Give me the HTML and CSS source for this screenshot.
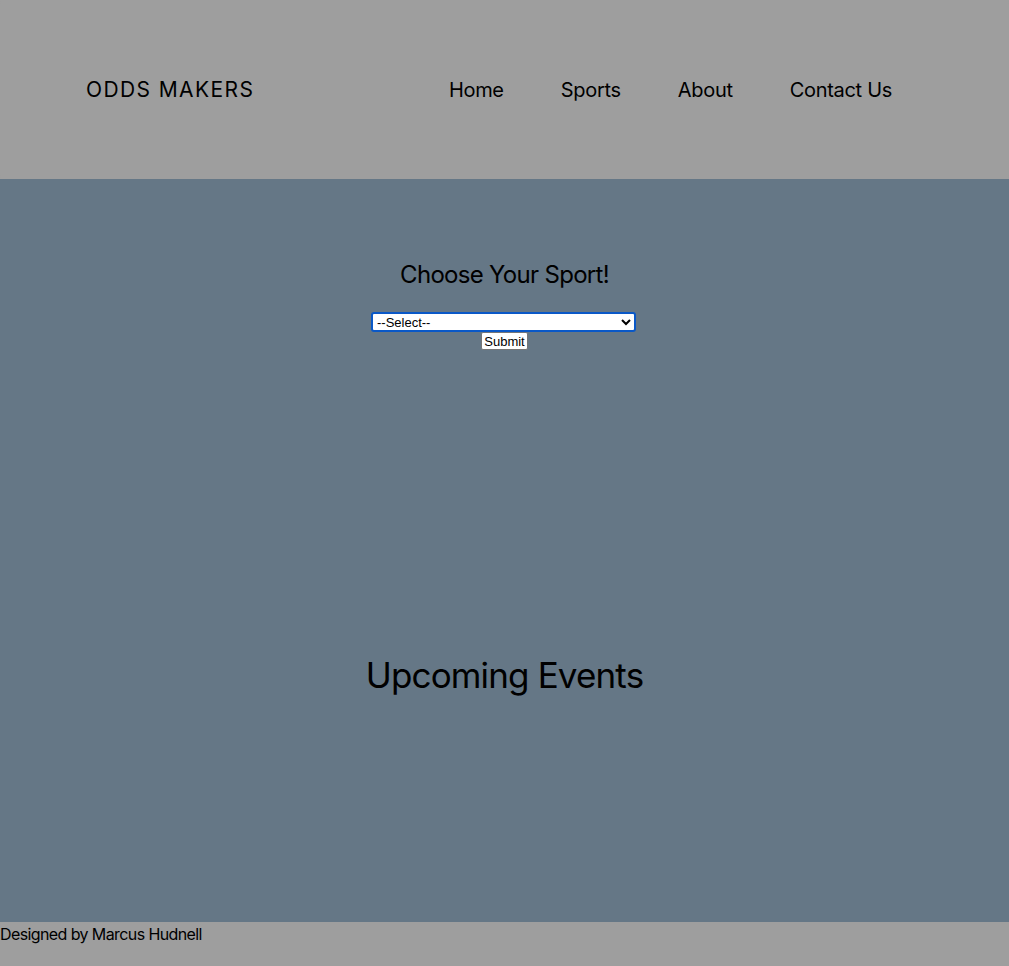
FILE: index.html
```html
<!DOCTYPE html>
<html>
<head>
<meta charset="utf-8">
<link rel="stylesheet" href="styles.css">
</head>
<body>
<header class="site-header">
  <div class="logo">ODDS MAKERS</div>
  <nav class="nav">
    <a href="#">Home</a>
    <a href="#">Sports</a>
    <a href="#">About</a>
    <a href="#">Contact Us</a>
  </nav>
</header>
<main class="main">
  <section class="chooser">
    <h2 class="chooser-title">Choose Your Sport!</h2>
    <form class="chooser-form">
      <select class="sport-select">
        <option>--Select--</option>
      </select>
      <button type="button" class="submit-btn">Submit</button>
    </form>
  </section>
  <section class="events">
    <h1 class="events-title">Upcoming Events</h1>
  </section>
</main>
<footer class="site-footer">Designed by Marcus Hudnell</footer>
</body>
</html>
```
FILE: styles.css
```css
html, body {
  margin: 0;
  padding: 0;
}
body {
  font-family: Inter, "Noto Sans", sans-serif;
  color: #000;
  background: #9e9e9e;
}
.site-header {
  height: 179px;
  box-sizing: border-box;
  background: #9e9e9e;
  border-radius: 4px;
  display: flex;
  align-items: center;
  justify-content: space-between;
  padding: 0 117px 0 86px;
}
.logo {
  font-size: 21px;
  letter-spacing: 1.4px;
  font-weight: 400;
}
.nav {
  display: flex;
  gap: 57px;
}
.nav a {
  color: #000;
  text-decoration: none;
  font-size: 20px;
  letter-spacing: -0.3px;
}
.main {
  background: #657786;
  height: 743px;
  display: flex;
  flex-direction: column;
  align-items: center;
}
.chooser {
  display: flex;
  flex-direction: column;
  align-items: center;
  padding-top: 80px;
}
.chooser-title {
  margin: 0;
  font-size: 24px;
  font-weight: 400;
  letter-spacing: -0.7px;
  line-height: 32px;
}
.chooser-form {
  margin-top: 21px;
  display: flex;
  flex-direction: column;
  align-items: center;
}
.sport-select {
  width: 265px;
  height: 20px;
  box-sizing: border-box;
  font-family: "Liberation Sans", Arial, sans-serif;
  font-size: 13px;
  border: 2px solid #0a58c7;
  border-radius: 3px;
  background: #fff;
  padding: 0;
  margin-left: -2px;
}
.submit-btn {
  margin-top: 0;
  font-family: "Liberation Sans", Arial, sans-serif;
  font-size: 13px;
  padding: 0 2px;
  height: 18px;
  background: #fff;
  border: 1px solid #767676;
  border-radius: 2px;
}
.events {
  padding-top: 303px;
}
.events-title {
  margin: 0;
  font-size: 35px;
  font-weight: 400;
  letter-spacing: -0.85px;
  line-height: 44px;
}
.site-footer {
  height: 44px;
  font-size: 16px;
  line-height: 24px;
  letter-spacing: -0.6px;
  background: #9e9e9e;
}
```
